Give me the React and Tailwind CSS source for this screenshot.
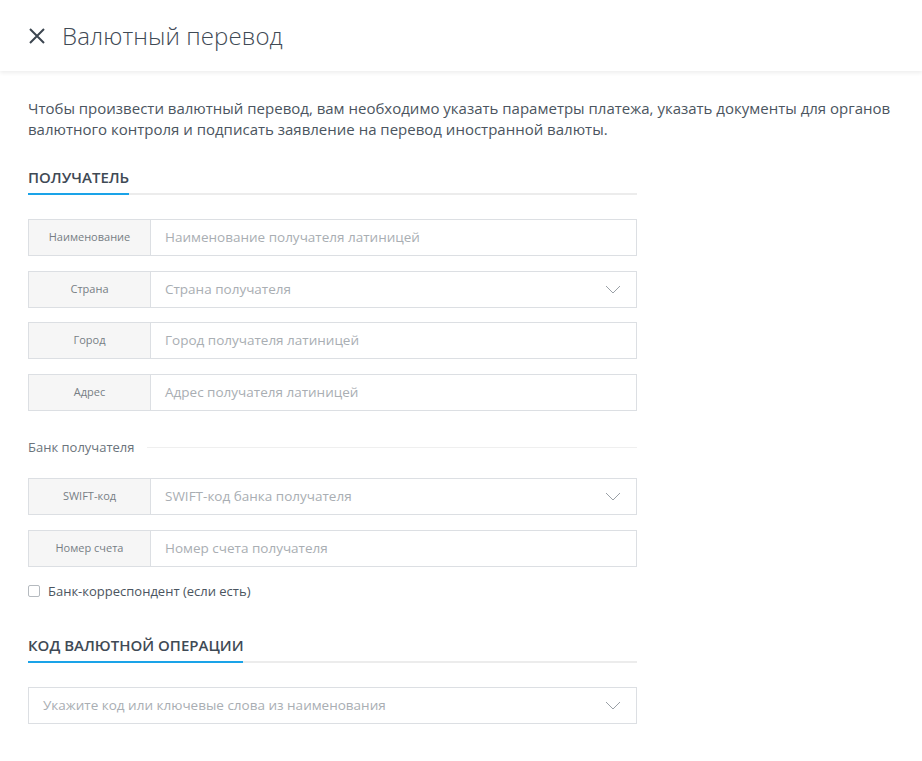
import React from "react";

const font = { fontFamily: '"Open Sans", "Noto Sans", sans-serif' };

function Chevron(){
return(
<svg width="16" height="9" viewBox="0 0 16 9" fill="none" className="shrink-0">
<path d="M1 1l7 7 7-7" stroke="#9aa0a6" strokeWidth="1" />
</svg>
);
}

function Field({ label, placeholder, select }){
return(
<div className="flex h-[37px] border border-[#dcdfe3] bg-white">
<div className="w-[122px] shrink-0 flex items-center justify-center bg-[#f6f6f6] border-r border-[#dcdfe3] text-[11px] text-[#777e85]">
{label}
</div>
<div className="flex-1 flex items-center justify-between pl-[14px] pr-[15px] text-[13.5px] text-[#a9aeb3]">
<span>{placeholder}</span>
{select && <Chevron/>}
</div>
</div>
);
}

function Section({ title, bar }){
return(
<div className="relative border-b-2 border-[#ececec] pb-[6px]">
<h3 className="text-[15px] font-semibold text-[#3f4a55] uppercase leading-5">{title}</h3>
<div className={`absolute left-0 -bottom-[2px] h-[2px] bg-[#1aa3e8] ${bar}`}/>
</div>
);
}

export default function App(){

return(

<div className="min-h-screen bg-white" style={font}>

{/* HEADER */}

<div className="h-[71px] flex items-center px-[28px] shadow-[0_2px_4px_rgba(0,0,0,0.07)]">
<svg width="18" height="18" viewBox="0 0 18 18" className="mr-[16px]">
<path d="M2 2l14 14M16 2L2 16" stroke="#3c4650" strokeWidth="2"/>
</svg>
<h1 className="text-[24px] font-light text-[#3f4a55] tracking-[0.1px]">Валютный перевод</h1>
</div>

{/* BODY */}

<div className="px-[28px] pt-[27px]">

<p className="text-[15px] leading-[21px] text-[#4b5560] max-w-[880px]">
Чтобы произвести валютный перевод, вам необходимо указать параметры платежа, указать документы для органов валютного контроля и подписать заявление на перевод иностранной валюты.
</p>

<div className="w-[609px] mt-[27px]">

<Section title="Получатель" bar="w-[101px]"/>

<div className="mt-[24px] flex flex-col gap-[14.5px]">
<Field label="Наименование" placeholder="Наименование получателя латиницей"/>
<Field label="Страна" placeholder="Страна получателя" select/>
<Field label="Город" placeholder="Город получателя латиницей"/>
<Field label="Адрес" placeholder="Адрес получателя латиницей"/>
</div>

<div className="mt-[27px] flex items-center gap-[12px]">
<span className="text-[13px] text-[#6b747c]">Банк получателя</span>
<div className="flex-1 h-px bg-[#efefef]"/>
</div>

<div className="mt-[21px] flex flex-col gap-[14.5px]">
<Field label="SWIFT-код" placeholder="SWIFT-код банка получателя" select/>
<Field label="Номер счета" placeholder="Номер счета получателя"/>
</div>

<label className="mt-[15px] flex items-center gap-[8px] text-[13px] text-[#4b5560]">
<span className="w-[12px] h-[12px] border border-[#b5babf] rounded-[2px] bg-white"/>
Банк-корреспондент (если есть)
</label>

<div className="mt-[34px]">
<Section title="Код валютной операции" bar="w-[215px]"/>
</div>

<div className="mt-[24px] h-[37px] border border-[#dcdfe3] flex items-center justify-between pl-[14px] pr-[15px] text-[13.5px] text-[#a9aeb3]">
<span>Укажите код или ключевые слова из наименования</span>
<Chevron/>
</div>

</div>

</div>

</div>

);
}
